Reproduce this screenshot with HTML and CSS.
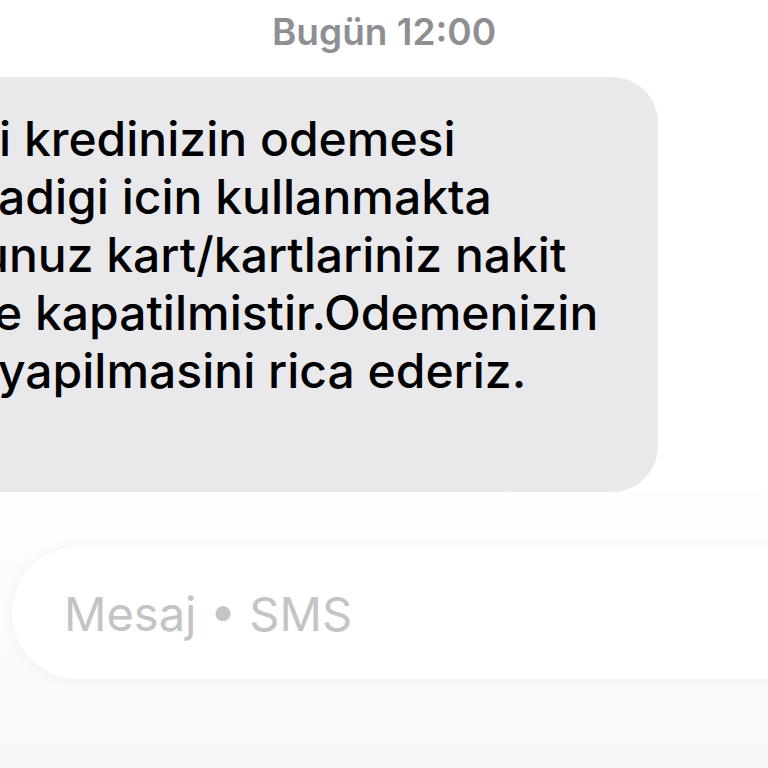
FILE: index.html
```html
<!DOCTYPE html>
<html lang="tr">
<head>
  <meta charset="UTF-8">
  <meta name="viewport" content="width=device-width, initial-scale=1.0">
  <title>Mesajlar</title>
  <link rel="stylesheet" href="styles.css">
</head>
<body>
  <div class="thread">
    <div class="stamp">Bugün 12:00</div>
    <div class="bubble">
      <div class="line l1">i kredinizin odemesi</div>
      <div class="line l2">adigi icin kullanmakta</div>
      <div class="line l3">unuz kart/kartlariniz nakit</div>
      <div class="line l4">e kapatilmistir.Odemenizin</div>
      <div class="line l5">yapilmasini rica ederiz.</div>
    </div>
  </div>
  <div class="composer">
    <div class="field">Mesaj • SMS</div>
  </div>
</body>
</html>
```

FILE: styles.css
```css
body {
  margin: 0;
  width: 768px;
  height: 768px;
  overflow: hidden;
  background: #ffffff;
  font-family: "Inter", "Liberation Sans", sans-serif;
}
.thread {
  display: flex;
  flex-direction: column;
}
.stamp {
  text-align: center;
  font-size: 37px;
  font-weight: 600;
  color: #8e8e93;
  padding-top: 9px;
  height: 77px;
  box-sizing: border-box;
}
.bubble {
  width: 658px;
  box-sizing: border-box;
  background: #e9e9eb;
  border-radius: 0 46px 46px 0;
  padding: 33px 0 92px 0;
  color: #000;
  font-size: 48px;
  font-weight: 500;
  line-height: 58px;
  white-space: nowrap;
}
.line { overflow: hidden; }
.l1 { text-indent: -1px; }
.l2 { text-indent: -2px; }
.l3 { text-indent: -20px; }
.l4 { text-indent: -6px; }
.l5 { text-indent: -2px; }
.composer {
  height: 276px;
  background: linear-gradient(#fefefe, #f8f8f8);
  padding: 55px 0 0 12px;
  box-sizing: border-box;
}
.field {
  height: 132px;
  margin-right: -80px;
  background: #ffffff;
  border-radius: 66px;
  box-shadow: 0 0 14px rgba(0, 0, 0, 0.045);
  display: flex;
  align-items: center;
  padding-left: 52px;
  font-size: 47px;
  color: #c4c4c6;
}
```
